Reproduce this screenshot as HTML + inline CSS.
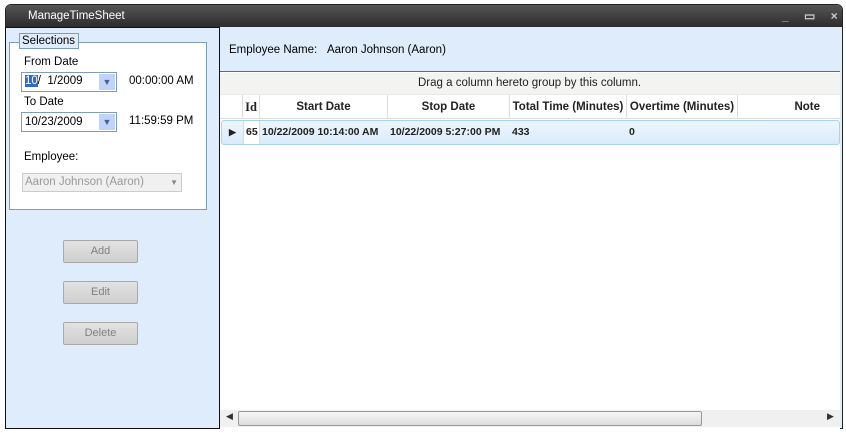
<!DOCTYPE html>
<html><head><style>
*{margin:0;padding:0;box-sizing:border-box}
body{width:846px;height:433px;background:#fff;position:relative;overflow:hidden;font-family:"Liberation Sans",sans-serif;font-size:11px;color:#000}
.a{position:absolute;white-space:nowrap}
.btn{position:absolute;left:63px;width:75px;height:23px;background:linear-gradient(#e2e2e2,#cfcfcf);border:1px solid #a9a9a9;border-radius:2px;color:#808080;text-align:center;line-height:21px;font-size:11px}
.hd{position:absolute;top:95px;height:24px;line-height:24px;font-weight:bold;font-family:"Liberation Sans",sans-serif;font-size:11.5px;border-right:1px solid #ddd;text-align:center;white-space:nowrap;color:#222}
.cell{position:absolute;top:121px;height:23px;line-height:23px;font-weight:bold;font-family:"Liberation Sans",sans-serif;font-size:10.5px;white-space:nowrap;color:#222}
</style></head><body>
<div class="a" style="left:5px;top:4px;width:838px;height:425px;border:1px solid #222;border-radius:6px 6px 0 0;background:#deecfb"></div>
<div class="a" style="left:6px;top:5px;width:836px;height:22px;background:linear-gradient(#555,#2c2c2c);border-radius:5px 5px 0 0;color:#fff;font-size:11.5px;line-height:22px;padding-left:22px">ManageTimeSheet</div>
<div class="a" style="left:782px;top:5px;color:#ccc;font-size:12px;line-height:22px;font-weight:bold;letter-spacing:6px">_ ▭ ×</div>
<div class="a" style="left:5px;top:27px;width:215px;height:402px;background:#deecfc;border:1px solid #111"></div>
<div class="a" style="left:9px;top:42px;width:198px;height:168px;background:#fff;border:1px solid #7f9db9"></div>
<div class="a" style="left:19px;top:33px;width:60px;height:16px;background:#deecfc;border:1px solid #7f9db9;line-height:14px;padding-left:2px;font-size:11.5px">Selections</div>
<div class="a" style="left:24px;top:56px;font-size:11.5px">From Date</div>
<div class="a" style="left:21px;top:72px;width:96px;height:20px;border:1px solid #7f9db9;background:#fff"></div>
<div class="a" style="left:25px;top:75px;font-size:11.5px"><span style="background:#316ac5;color:#fff">10</span>/ &nbsp;1/2009</div>
<div class="a" style="left:99px;top:74px;width:16px;height:16px;background:#c1d3fb;color:#4d6185;font-size:9px;text-align:center;line-height:16px">▼</div>
<div class="a" style="left:129px;top:75px;font-size:11.5px">00:00:00 AM</div>
<div class="a" style="left:24px;top:96px;font-size:11.5px">To Date</div>
<div class="a" style="left:21px;top:112px;width:96px;height:20px;border:1px solid #7f9db9;background:#fff"></div>
<div class="a" style="left:25px;top:116px;font-size:11.5px">10/23/2009</div>
<div class="a" style="left:99px;top:114px;width:16px;height:16px;background:#c1d3fb;color:#4d6185;font-size:9px;text-align:center;line-height:16px">▼</div>
<div class="a" style="left:129px;top:115px;font-size:11.5px">11:59:59 PM</div>
<div class="a" style="left:24px;top:151px;font-size:11.5px">Employee:</div>
<div class="a" style="left:22px;top:173px;width:160px;height:19px;background:#f0f0f0;border:1px solid #ccc;color:#999;font-size:11.5px;line-height:17px;padding-left:2px">Aaron Johnson (Aaron)<span style="position:absolute;right:3px;font-size:8px;color:#888">▼</span></div>
<div class="btn" style="top:240px">Add</div>
<div class="btn" style="top:281px">Edit</div>
<div class="btn" style="top:322px">Delete</div>
<div class="a" style="left:220px;top:28px;width:620px;height:44px;background:#deecfb;border-bottom:1px solid #5a6b7c"></div>
<div class="a" style="left:229px;top:44px;font-size:11.5px">Employee Name:</div>
<div class="a" style="left:327px;top:44px;font-size:11.5px">Aaron Johnson (Aaron)</div>
<div class="a" style="left:220px;top:72px;width:620px;height:357px;background:#fff"></div>
<div class="a" style="left:220px;top:73px;width:620px;height:21px;background:#f3f3f1;font-family:'Liberation Sans',sans-serif;font-size:11.5px;line-height:21px;padding-left:198px;color:#222">Drag a column hereto group by this column.</div>
<div class="a" style="left:220px;top:94px;width:620px;height:25px;background:#fff;border-top:1px solid #e8e8e8;border-bottom:1px solid #ddd"></div>
<div class="hd" style="left:221px;width:22px"></div>
<div class="hd" style="left:243px;width:17px;font-family:'Liberation Serif',serif;font-size:12.5px">Id</div>
<div class="hd" style="left:260px;width:128px">Start Date</div>
<div class="hd" style="left:388px;width:122px">Stop Date</div>
<div class="hd" style="left:510px;width:117px">Total Time (Minutes)</div>
<div class="hd" style="left:627px;width:111px">Overtime (Minutes)</div>
<div class="hd" style="left:738px;width:102px;border:none;text-align:right;padding-right:20px">Note</div>
<div class="a" style="left:221px;top:120px;width:619px;height:25px;background:linear-gradient(#eef6fd,#d9ebfa);border:1px solid #a9d2ee;border-radius:3px"></div>
<div class="a" style="left:243px;top:121px;width:17px;height:23px;background:#fff;border-left:1px solid #cde;border-right:1px solid #cde"></div>
<div class="cell" style="left:229px;font-size:9px">▶</div>
<div class="cell" style="left:246px">65</div>
<div class="cell" style="left:262px">10/22/2009 10:14:00 AM</div>
<div class="cell" style="left:390px">10/22/2009 5:27:00 PM</div>
<div class="cell" style="left:512px">433</div>
<div class="cell" style="left:629px">0</div>
<div class="a" style="left:220px;top:410px;width:620px;height:17px;background:#f0f0f0"></div>
<div class="a" style="left:238px;top:411px;width:464px;height:15px;background:linear-gradient(#f6f6f6,#dcdcdc);border:1px solid #999;border-radius:2px"></div>
<div class="a" style="left:226px;top:411px;font-size:9px;color:#333">◀</div>
<div class="a" style="left:827px;top:411px;font-size:9px;color:#333">▶</div>
</body></html>
